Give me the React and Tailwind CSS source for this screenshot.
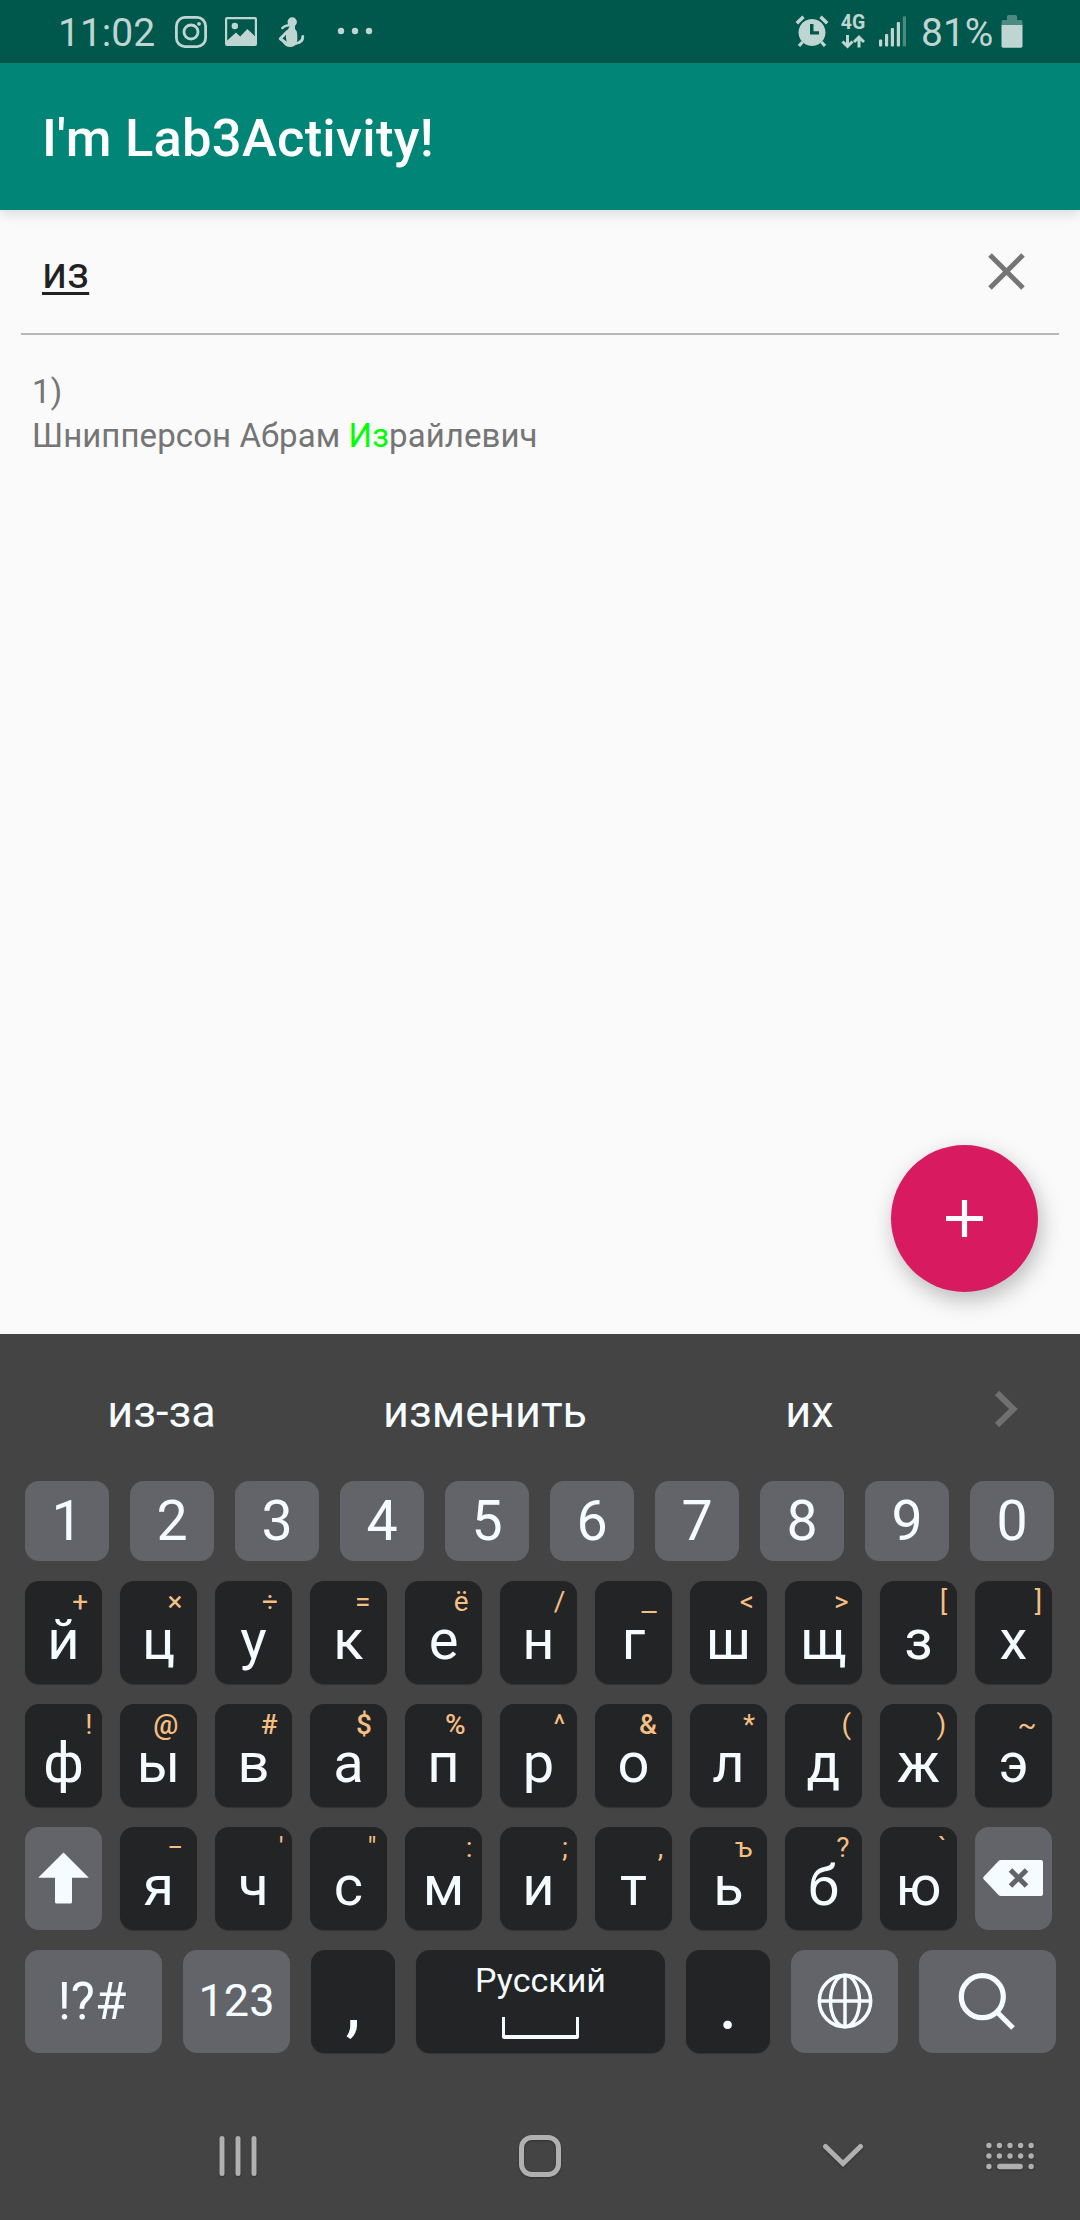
import React from "react";

const ROWS = [
  [["й", "+"], ["ц", "×", "mr-[1px]"], ["у", "÷"], ["к", "=", "mr-[3px]"], ["е", "ё"], ["н", "/"], ["г", "_", "mr-[4px] scale-x-[1.2]"], ["ш", "<"], ["щ", ">"], ["з", "["], ["х", "]"]],
  [["ф", "!"], ["ы", "@", "font-medium"], ["в", "#", "font-medium"], ["а", "$", "font-medium mr-[1px]"], ["п", "%", "font-medium"], ["р", "^"], ["о", "&", "font-medium"], ["л", "*"], ["д", "("], ["ж", ")"], ["э", "~"]],
  [["я", "−"], ["ч", "'"], ["с", "\""], ["м", ":"], ["и", ";"], ["т", ","], ["ь", "ъ"], ["б", "?"], ["ю", "`"]],
];

const DARK = "bg-[#222426] shadow-[0_1px_1px_rgba(0,0,0,0.25)]";
const GREY = "bg-[#626469]";

function LetterKey({ letter, hint, hintClass = "" }) {
  return (
    <div className={`relative h-[103px] w-[77px] rounded-[14px] pt-[26px] text-center text-[56px] leading-[66px] ${DARK}`}>
      {letter}
      <span className={`absolute top-[4px] right-[6px] -translate-x-1/2 text-[28px] leading-[33px] text-[#f5be83] ${hintClass}`}>{hint}</span>
    </div>
  );
}

function LetterRow({ keys, before, after }) {
  return (
    <div className="flex gap-[18px]">
      {before}
      {keys.map(([l, h, c]) => <LetterKey key={l} letter={l} hint={h} hintClass={c} />)}
      {after}
    </div>
  );
}

function StatusBar() {
  return (
    <div className="flex h-[63px] items-start bg-[#00574b] text-[#bfd5d2]">
      <div className="ml-[58px] w-[117px] pt-[10px] text-[39px] leading-[46px]">11:02</div>
      <svg className="mt-[16px] h-[32px] w-[32px]" viewBox="0 0 32 32" fill="none" stroke="currentColor">
        <rect x="1.4" y="1.4" width="29.2" height="29.2" rx="8.5" strokeWidth="2.8" />
        <circle cx="16" cy="16" r="7" strokeWidth="2.8" />
        <circle cx="24" cy="7.8" r="1.9" fill="currentColor" stroke="none" />
      </svg>
      <svg className="mt-[16px] ml-[18px] h-[32px] w-[32px]" viewBox="0 0 32 32">
        <path fillRule="evenodd" fill="currentColor" d="M2 1H30Q32 1 32 3V28Q32 30 30 30H2Q0 30 0 28V3Q0 1 2 1ZM2.2 3.2V24.5L11 16.5L15.2 20.4L22.3 13L29.8 20V3.2Z" />
        <circle cx="9.8" cy="10" r="3.2" fill="currentColor" />
      </svg>
      <svg className="mt-[16px] ml-[21px] h-[32px] w-[28px]" viewBox="0 0 28 32" fill="currentColor">
        <circle cx="14.2" cy="6" r="4.7" />
        <path d="M11.500 9H17L17 13Q19.500 15 19.300 20V24L18 28H9L8 22V15Q11.500 12.500 11.500 9Z" />
        <path d="M10.500 9.300L7 10L4.300 12" fill="none" stroke="currentColor" strokeWidth="2.400" strokeLinecap="round" />
        <path d="M8.800 16L2.300 22.800L8 27" fill="none" stroke="currentColor" strokeWidth="3" strokeLinecap="round" strokeLinejoin="round" />
        <path d="M18 27.500Q25 26 24.800 20.500" fill="none" stroke="currentColor" strokeWidth="2.800" strokeLinecap="round" />
        <path d="M4.500 26H20Q17 31 12 31Q7 31 4.500 26Z" />
      </svg>
      <svg className="mt-[27px] ml-[31px] h-[8px] w-[36px]" viewBox="0 0 36 8" fill="currentColor">
        <circle cx="4" cy="4" r="3.2" /><circle cx="18" cy="4" r="3.2" /><circle cx="32" cy="4" r="3.2" />
      </svg>
      <svg className="mt-[15px] ml-auto h-[33px] w-[34px]" viewBox="0 0 34 33">
        <path fillRule="evenodd" fill="currentColor" d="M17 4A13.5 13.5 0 1 1 16.99 4ZM15 9V19.5H24V16.3H18.5V9Z" />
        <path d="M1.8 8.2L8.5 1.8M32.2 8.2L25.5 1.8" stroke="currentColor" strokeWidth="3.6" />
        <path d="M7.5 27L4 31M26.5 27L30 31" stroke="currentColor" strokeWidth="3.2" />
      </svg>
      <div className="ml-[11px] flex w-[26px] flex-col items-center pt-[13px]">
        <span className="text-[19.5px] leading-[20px] font-bold">4G</span>
        <svg className="mt-px h-[16px] w-[24px]" viewBox="0 0 24 16" fill="none" stroke="currentColor" strokeWidth="3">
          <path d="M6.5 1V12M1.5 7.5L6.5 12.5L11.5 7.5M18 13.500V3M13 8L18 3L23 8" />
        </svg>
      </div>
      <svg className="mt-[16px] ml-[13px] h-[31px] w-[28px]" viewBox="0 0 28 31" fill="currentColor">
        <rect x="0" y="23.5" width="3.2" height="7" rx="1" />
        <rect x="6" y="18" width="3.2" height="12.5" rx="1" />
        <rect x="11.8" y="12" width="3.2" height="18.5" rx="1" />
        <rect x="17.8" y="6" width="3.2" height="24.5" rx="1" />
        <rect x="23.8" y="0.3" width="3.2" height="30.2" rx="1" opacity="0.4" />
      </svg>
      <div className="ml-[14px] w-[80px] pt-[10px] text-[39px] leading-[46px] whitespace-nowrap">81%</div>
      <svg className="mt-[15px] mr-[57px] h-[33px] w-[22px]" viewBox="0 0 22 33" fill="currentColor">
        <path d="M2 5H6V1.5Q6 0 7.500 0H14.500Q16 0 16 1.5V5H20Q21.500 5 21.500 6.500V10H0.500V6.500Q0.500 5 2 5Z" opacity="0.4" />
        <path d="M0.500 10H21.500V31Q21.500 32.700 20 32.700H2Q0.500 32.700 0.500 31Z" />
      </svg>
    </div>
  );
}

function NavBar() {
  return (
    <div className="mt-[76px] flex h-[54px] items-center text-[#b0b0b0] [filter:drop-shadow(0_1px_1px_rgba(0,0,0,0.3))]">
      <svg className="ml-[218px] h-[42px] w-[40px]" viewBox="0 0 40 42" stroke="currentColor" strokeWidth="5" strokeLinecap="round">
        <path d="M4 3.500V38.500M20 3.500V38.500M36 3.500V38.500" />
      </svg>
      <div className="ml-[261px] h-[42px] w-[42px] rounded-[13px] border-[5px] border-current" />
      <svg className="ml-[261px] h-[26px] w-[42px]" viewBox="0 0 42 26" fill="none" stroke="currentColor" strokeWidth="5" strokeLinecap="round">
        <path d="M3.500 3.500L21 20.500L38.500 3.500" />
      </svg>
      <svg className="ml-[122px] h-[28px] w-[48px]" viewBox="0 0 48 28" fill="none" stroke="currentColor" strokeWidth="5.400" strokeLinecap="round">
        <path d="M2.900 3.500H2.910M13.400 3.500H13.410M24 3.500H24.010M34.600 3.500H34.610M45.100 3.500H45.110M2.900 14H2.910M13.400 14H13.410M24 14H24.010M34.600 14H34.610M45.100 14H45.110M2.900 24.500H2.910M13.800 24.500H34.200M45.100 24.500H45.110" />
      </svg>
    </div>
  );
}

export default function App() {
  return (
    <div className="flex h-[2220px] w-[1080px] flex-col overflow-hidden bg-[#fafafa] font-[Roboto,sans-serif]">
      <StatusBar />
      <header className="relative h-[147px] bg-[#008577] pt-[44px] pl-[42px] text-[52.5px] leading-[62px] font-medium tracking-[0.25px] text-white shadow-[0_4px_12px_rgba(0,0,0,0.13)]">
        I'm Lab3Activity!
      </header>

      <main className="flex flex-1 flex-col">
        <div className="mx-[21px] flex h-[125px] items-start justify-between border-b-2 border-[#b8b8b8] pr-[34px] pl-[21px]">
          <div className="pt-[38px] text-[43.5px] leading-[52px] text-[#212121] underline decoration-[2.500px] underline-offset-[4px]">из</div>
          <svg className="mt-[43px] h-[37px] w-[37px]" viewBox="0 0 37 37" stroke="#757575" strokeWidth="5">
            <path d="M2 2L35 35M35 2L2 35" />
          </svg>
        </div>
        <div className="pt-[35px] pl-[32px] text-[33px] leading-[44px] tracking-[0.08px] text-[#757575]">
          <div>1)</div>
          <div>Шнипперсон Абрам <span className="text-[#00ff00]">Из</span>райлевич</div>
        </div>
        <div className="mt-auto mr-[42px] mb-[42px] flex h-[147px] w-[147px] items-center justify-center self-end rounded-full bg-[#d81b60] shadow-[3px_8px_22px_rgba(0,0,0,0.26)]">
          <svg className="h-[37px] w-[37px]" viewBox="0 0 37 37" stroke="#fff" strokeWidth="5.200"><path d="M18.500 0V37M0 18.500H37" /></svg>
        </div>
      </main>

      <section className="h-[886px] bg-[#444444] text-[#f5fcff]">
        <div className="flex h-[147px] items-start pt-[51px] text-center text-[45px] leading-[53px]">
          <div className="w-[323px]">из-за</div>
          <div className="w-[324px]">изменить</div>
          <div className="w-[325px]">их</div>
          <svg className="mt-[5px] ml-[22px] h-[38px] w-[26px]" viewBox="0 0 26 38" fill="none" stroke="#707070" strokeWidth="6">
            <path d="M3 3L19.500 19L3 35" />
          </svg>
        </div>

        <div className="flex flex-col gap-[20px] pl-[25px]">
          <div className="flex gap-[21px]">
            {["1", "2", "3", "4", "5", "6", "7", "8", "9", "0"].map((d) => (
              <div key={d} className={`h-[80px] w-[84px] rounded-[14px] pt-[8px] text-center text-[55.5px] leading-[65px] ${GREY}`}>{d}</div>
            ))}
          </div>
          <LetterRow keys={ROWS[0]} />
          <LetterRow keys={ROWS[1]} />
          <LetterRow
            keys={ROWS[2]}
            before={
              <div className={`flex h-[103px] w-[77px] justify-center rounded-[14px] pt-[25px] ${GREY}`}>
                <svg className="h-[52px] w-[51px]" viewBox="0 0 51 52" fill="currentColor">
                  <path d="M25.500 0.500L50.800 25.800H34V50Q34 51.500 32.500 51.500H18.500Q17 51.500 17 50V25.800H0.200Z" />
                </svg>
              </div>
            }
            after={
              <div className={`flex h-[103px] w-[77px] rounded-[14px] pt-[33px] pl-[8px] ${GREY}`}>
                <svg className="h-[36px] w-[60px]" viewBox="0 0 60 36">
                  <path fill="currentColor" d="M18 0H58Q60 0 60 2V34Q60 36 58 36H18Q16.500 36 15.500 35L0.700 19.200Q-0.300 18 0.700 16.800L15.500 1Q16.500 0 18 0Z" />
                  <path d="M27.500 10L43.500 26M43.500 10L27.500 26" stroke="#626469" strokeWidth="5" />
                </svg>
              </div>
            }
          />
          <div className="flex h-[103px] gap-[21px]">
            <div className={`w-[137px] rounded-[14px] pt-[21px] pr-[3px] text-center text-[51px] leading-[62px] ${GREY}`}>!?#</div>
            <div className={`w-[107px] rounded-[14px] pt-[24px] text-center text-[45px] leading-[54px] ${GREY}`}>123</div>
            <div className={`w-[84px] rounded-[14px] pt-[17px] text-center text-[76px] leading-[70px] ${DARK}`}>,</div>
            <div className={`flex w-[249px] flex-col items-center rounded-[14px] pt-[9px] ${DARK}`}>
              <span className="pt-px text-[34px] leading-[41px]">Русский</span>
              <div className="mt-[16px] h-[22px] w-[77px] rounded-b-[3px] border-x-[3px] border-b-[4px] border-current" />
            </div>
            <div className={`w-[84px] rounded-[14px] pt-[17px] text-center text-[76px] leading-[70px] ${DARK}`}>.</div>
            <div className={`flex w-[107px] justify-center rounded-[14px] pt-[23px] ${GREY}`}>
              <svg className="h-[56px] w-[56px]" viewBox="0 0 56 56" fill="none" stroke="currentColor" strokeWidth="3.500">
                <circle cx="28" cy="28" r="25.700" />
                <ellipse cx="28" cy="28" rx="14.500" ry="25.700" />
                <path d="M28 2V54M2 28H54" />
              </svg>
            </div>
            <div className={`flex w-[137px] rounded-[14px] pt-[22px] pl-[39px] ${GREY}`}>
              <svg className="h-[58px] w-[58px]" viewBox="0 0 58 58" fill="none" stroke="currentColor" strokeWidth="5.200">
                <circle cx="24.300" cy="24.700" r="21" />
                <path d="M39 40L55 56" />
              </svg>
            </div>
          </div>
        </div>

        <NavBar />
      </section>
    </div>
  );
}
